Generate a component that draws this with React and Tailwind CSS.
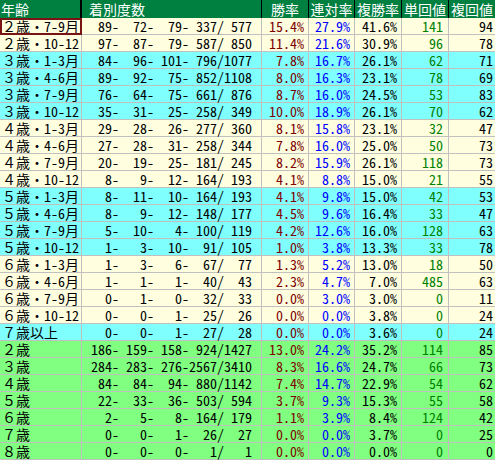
const CREAM = "bg-[#FFFFE0]";
const AQUA = "bg-[#80FFFF]";
const GREEN = "bg-[#80FF80]";

const rows = [
  ["２歳・7-9月", [89, 72, 79, 337, 577], "15.4%", "27.9%", "41.6%", 141, 94, CREAM],
  ["２歳・10-12", [97, 87, 79, 587, 850], "11.4%", "21.6%", "30.9%", 96, 78, CREAM],
  ["３歳・1-3月", [84, 96, 101, 796, 1077], "7.8%", "16.7%", "26.1%", 62, 71, AQUA],
  ["３歳・4-6月", [89, 92, 75, 852, 1108], "8.0%", "16.3%", "23.1%", 78, 69, AQUA],
  ["３歳・7-9月", [76, 64, 75, 661, 876], "8.7%", "16.0%", "24.5%", 53, 83, AQUA],
  ["３歳・10-12", [35, 31, 25, 258, 349], "10.0%", "18.9%", "26.1%", 70, 62, AQUA],
  ["４歳・1-3月", [29, 28, 26, 277, 360], "8.1%", "15.8%", "23.1%", 32, 47, CREAM],
  ["４歳・4-6月", [27, 28, 31, 258, 344], "7.8%", "16.0%", "25.0%", 50, 73, CREAM],
  ["４歳・7-9月", [20, 19, 25, 181, 245], "8.2%", "15.9%", "26.1%", 118, 73, CREAM],
  ["４歳・10-12", [8, 9, 12, 164, 193], "4.1%", "8.8%", "15.0%", 21, 55, CREAM],
  ["５歳・1-3月", [8, 11, 10, 164, 193], "4.1%", "9.8%", "15.0%", 42, 53, AQUA],
  ["５歳・4-6月", [8, 9, 12, 148, 177], "4.5%", "9.6%", "16.4%", 33, 47, AQUA],
  ["５歳・7-9月", [5, 10, 4, 100, 119], "4.2%", "12.6%", "16.0%", 128, 63, AQUA],
  ["５歳・10-12", [1, 3, 10, 91, 105], "1.0%", "3.8%", "13.3%", 33, 78, AQUA],
  ["６歳・1-3月", [1, 3, 6, 67, 77], "1.3%", "5.2%", "13.0%", 18, 50, CREAM],
  ["６歳・4-6月", [1, 1, 1, 40, 43], "2.3%", "4.7%", "7.0%", 485, 63, CREAM],
  ["６歳・7-9月", [0, 1, 0, 32, 33], "0.0%", "3.0%", "3.0%", 0, 11, CREAM],
  ["６歳・10-12", [0, 0, 1, 25, 26], "0.0%", "0.0%", "3.8%", 0, 24, CREAM],
  ["７歳以上", [0, 0, 1, 27, 28], "0.0%", "0.0%", "3.6%", 0, 24, AQUA],
  ["２歳", [186, 159, 158, 924, 1427], "13.0%", "24.2%", "35.2%", 114, 85, GREEN],
  ["３歳", [284, 283, 276, 2567, 3410], "8.3%", "16.6%", "24.7%", 66, 73, GREEN],
  ["４歳", [84, 84, 94, 880, 1142], "7.4%", "14.7%", "22.9%", 54, 62, GREEN],
  ["５歳", [22, 33, 36, 503, 594], "3.7%", "9.3%", "15.3%", 55, 58, GREEN],
  ["６歳", [2, 5, 8, 164, 179], "1.1%", "3.9%", "8.4%", 124, 42, GREEN],
  ["７歳", [0, 0, 1, 26, 27], "0.0%", "0.0%", "3.7%", 0, 25, GREEN],
  ["８歳", [0, 0, 0, 1, 1], "0.0%", "0.0%", "0.0%", 0, 0, GREEN],
];

const cols = "grid grid-cols-[82px_180px_47px_46px_47px_47px_46px]";
const cell = "h-[17px] border-r border-b border-[#C0C0C0] flex items-center";

function Record({ d }) {
  // 1着-2着-3着-着外/総数, each field 4 chars wide
  const seps = ["-", "-", "-", "/"];
  return (
    <div className="flex">
      {d.map((n, i) => (
        <div key={i} className="flex">
          <span className="w-[28px] text-right">{n}</span>
          {i < 4 && <span className="w-[7px] text-center">{seps[i]}</span>}
        </div>
      ))}
    </div>
  );
}

export default function App() {
  return (
    <div className="w-[495px] h-[460px] overflow-hidden bg-white text-[14px] leading-[16px] text-black font-['Noto_Sans_Mono_CJK_JP','Noto_Sans_CJK_JP','DejaVu_Sans_Mono',monospace]">
      {/* header */}
      <div className={`${cols} h-[18px] bg-[#008040] text-white`}>
        <div className="border-r-2 border-black pl-[1px] flex items-center">年齢</div>
        <div className="border-r border-black pl-[7px] flex items-center">着別度数</div>
        <div className="border-r border-black flex items-center justify-center">勝率</div>
        <div className="border-r border-black flex items-center justify-center">連対率</div>
        <div className="border-r border-black flex items-center justify-center">複勝率</div>
        <div className="border-r border-black flex items-center justify-center">単回値</div>
        <div className="flex items-center justify-center">複回値</div>
      </div>

      {rows.map(([label, d, win, ren, fuku, tan, fk, bg], i) => (
        <div key={i} className={`${cols} ${bg}`}>
          <div
            className={`${cell} pl-[2px] ${
              i === 0 ? "outline-2 outline-[#7A1414] -outline-offset-2" : ""
            }`}
          >
            {label}
          </div>
          <div className={`${cell} justify-end pr-[9px]`}>
            <Record d={d} />
          </div>
          <div className={`${cell} justify-end pr-[4px] text-[#800000]`}>{win}</div>
          <div className={`${cell} justify-end pr-[4px] text-[#0000FF]`}>{ren}</div>
          <div className={`${cell} justify-end pr-[4px]`}>{fuku}</div>
          <div className={`${cell} justify-end pr-[5px] text-[#008000]`}>{tan}</div>
          <div className={`${cell} justify-end pr-[2px] border-r-0`}>{fk}</div>
        </div>
      ))}
    </div>
  );
}
